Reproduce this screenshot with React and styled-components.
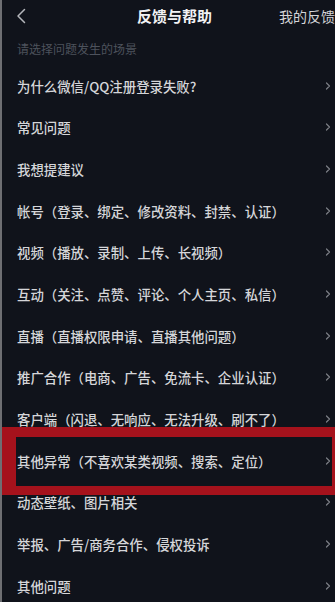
import { createGlobalStyle, styled } from "styled-components";

const GlobalStyle = createGlobalStyle`
  html, body {
    margin: 0;
    padding: 0;
    background: #10131b;
  }
  body {
    font-family: "Noto Sans CJK SC", "Noto Sans", sans-serif;
  }
`;

const ROW_H = 41.67;

const items = [
  "为什么微信/QQ注册登录失败?",
  "常见问题",
  "我想提建议",
  "帐号（登录、绑定、修改资料、封禁、认证）",
  "视频（播放、录制、上传、长视频）",
  "互动（关注、点赞、评论、个人主页、私信）",
  "直播（直播权限申请、直播其他问题）",
  "推广合作（电商、广告、免流卡、企业认证）",
  "客户端（闪退、无响应、无法升级、刷不了）",
  "其他异常（不喜欢某类视频、搜索、定位）",
  "动态壁纸、图片相关",
  "举报、广告/商务合作、侵权投诉",
  "其他问题",
];

// index of the row circled in red
const HIGHLIGHT = 9;

const Chevron = () => (
  <svg width="7" height="12" viewBox="0 0 7 12" fill="none">
    <path
      d="M1.5 3 L4.5 6 L1.5 9"
      stroke="#7c7f86"
      strokeWidth="1.2"
      strokeLinecap="round"
      strokeLinejoin="round"
    />
  </svg>
);

const App = () => {
  return (
    <Page>
      <GlobalStyle />
      <Header>
        <BackButton>
          <svg width="10" height="16" viewBox="0 0 10 16" fill="none">
            <path
              d="M8.5 1.5 L2 8 L8.5 14.5"
              stroke="#b4b6bb"
              strokeWidth="1.5"
              strokeLinecap="round"
              strokeLinejoin="round"
            />
          </svg>
        </BackButton>
        <Title>反馈与帮助</Title>
        <HeaderLink>我的反馈</HeaderLink>
      </Header>
      <SectionLabel>请选择问题发生的场景</SectionLabel>
      <List>
        {items.map((text) => (
          <Row key={text}>
            <RowText>{text}</RowText>
            <Arrow>
              <Chevron />
            </Arrow>
          </Row>
        ))}
        <Highlight style={{ top: `${HIGHLIGHT * ROW_H - 13}px` }} />
      </List>
    </Page>
  );
};

const Page = styled.div`
  position: relative;
  width: 335px;
  height: 602px;
  overflow: hidden;
  background: #10131b;
  box-sizing: border-box;
  border-left: 2px solid #6e6f73;
`;

const Header = styled.div`
  display: flex;
  align-items: center;
  height: 31px;
  padding-left: 14px;
  white-space: nowrap;
`;

const BackButton = styled.div`
  display: flex;
  align-items: center;
  width: 12px;
  height: 16px;
`;

const Title = styled.div`
  margin-left: 110px;
  font-size: 15px;
  font-weight: 700;
  color: #f1f1f3;
  flex-shrink: 0;
`;

const HeaderLink = styled.div`
  margin-left: 67px;
  font-size: 14px;
  color: #d4d5d8;
  flex-shrink: 0;
`;

const SectionLabel = styled.div`
  display: flex;
  align-items: center;
  height: 34px;
  padding-left: 15px;
  font-size: 12px;
  color: #4d525c;
`;

const List = styled.div`
  position: relative;
  display: flex;
  flex-direction: column;
`;

const Row = styled.div`
  display: flex;
  align-items: center;
  height: ${ROW_H}px;
  padding-left: 15px;
  padding-right: 3px;
`;

const RowText = styled.div`
  flex: 1;
  font-size: 13.4px;
  font-weight: 500;
  color: #d5d6d9;
  white-space: nowrap;
`;

const Arrow = styled.div`
  display: flex;
  align-items: center;
`;

const Highlight = styled.div`
  position: absolute;
  left: 0;
  right: 0;
  height: 68px;
  box-sizing: border-box;
  border-style: solid;
  border-color: #a5121c;
  border-width: 10px 3px 9px 14px;
  pointer-events: none;
`;

export default App;
